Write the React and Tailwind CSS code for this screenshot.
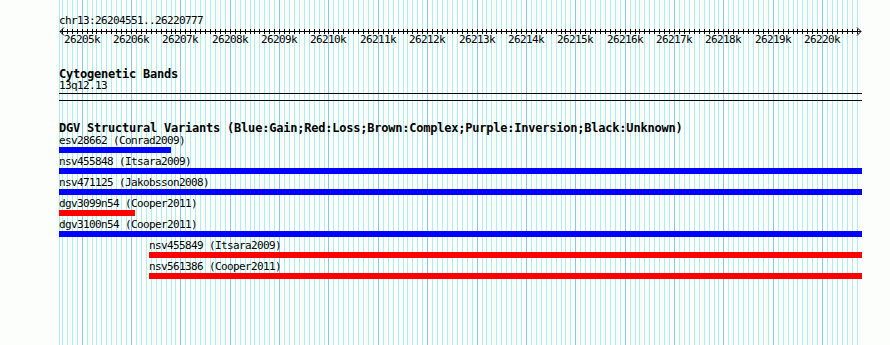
import React from "react";

const START = 26204551;
const px = (pos) => Math.floor(60 + ((pos - START) * 801) / 16226);

const minor = [];
for (let p = 26204600; p <= 26220700; p += 100) minor.push(p);
const majors = [];
for (let k = 26205; k <= 26220; k++) majors.push(k);

const variants = [
  { name: "esv28662", src: "Conrad2009", color: "bg-[#0000ff]", s: 59, e: 171 },
  { name: "nsv455848", src: "Itsara2009", color: "bg-[#0000ff]", s: 59, e: 862 },
  { name: "nsv471125", src: "Jakobsson2008", color: "bg-[#0000ff]", s: 59, e: 862 },
  { name: "dgv3099n54", src: "Cooper2011", color: "bg-[#ff0000]", s: 59, e: 135 },
  { name: "dgv3100n54", src: "Cooper2011", color: "bg-[#0000ff]", s: 59, e: 862 },
  { name: "nsv455849", src: "Itsara2009", color: "bg-[#ff0000]", s: 149, e: 862 },
  { name: "nsv561386", src: "Cooper2011", color: "bg-[#ff0000]", s: 149, e: 862 },
];

function Grid() {
  return (
    <svg className="absolute inset-0" width="890" height="345">
      <line x1="59.5" y1="0" x2="59.5" y2="345" stroke="#aeeeee" strokeWidth="1" />
      {minor.map((p) => {
        const x = px(p) + 0.5;
        const major = p % 1000 === 0;
        return (
          <line
            key={p}
            x1={x}
            y1="0"
            x2={x}
            y2="345"
            stroke={major ? "#88c6ee" : "#aeeeee"}
            strokeWidth="1"
          />
        );
      })}
    </svg>
  );
}

function Ruler() {
  return (
    <svg width="803" height="7" className="block overflow-visible">
      <line x1="1" y1="4.5" x2="802" y2="4.5" stroke="#000" strokeWidth="1" />
      {minor.map((p) => {
        const x = px(p) - 59 + 0.5;
        return <line key={p} x1={x} y1="2" x2={x} y2="7" stroke="#000" strokeWidth="1" />;
      })}
      <polyline points="5,0.5 1,4.5 5,8.5" fill="none" stroke="#000" strokeWidth="1" />
      <polyline points="798,0.5 802,4.5 798,8.5" fill="none" stroke="#000" strokeWidth="1" />
    </svg>
  );
}

export default function App() {
  const mono = "font-['DejaVu_Sans_Mono',monospace] text-[11px] leading-[12px] tracking-[-0.62px] text-black whitespace-pre";
  const bold = "font-['DejaVu_Sans_Mono',monospace] font-bold text-[12px] tracking-[-0.22px] text-black whitespace-pre";
  return (
    <div className="relative w-[890px] h-[345px] overflow-hidden bg-[#fcfefc]">
      <Grid />
      <div className="relative pl-[59px] flex flex-col">
        <div className={`${mono} mt-[15px] h-[12px]`}>chr13:26204551..26220777</div>
        <Ruler />
        <div className="relative h-[13px] w-[803px]">
          {majors.map((k) => (
            <span
              key={k}
              className={`${mono} absolute top-0`}
              style={{ left: px(k * 1000) - 59 - 18 }}
            >
              {k}k
            </span>
          ))}
        </div>
        <div className={`${bold} mt-[21px] leading-[12px] h-[12px]`}>Cytogenetic Bands</div>
        <div className={`${mono} h-[12px]`}>13q12.13</div>
        <div className="mt-[1px] h-px w-[803px] bg-black" />
        <div className="mt-[6px] h-px w-[803px] bg-black" />
        <div className={`${bold} mt-[21px] leading-[12px] h-[12px]`}>
          DGV Structural Variants (Blue:Gain;Red:Loss;Brown:Complex;Purple:Inversion;Black:Unknown)
        </div>
        <div className="mt-[1px] flex flex-col gap-[3px]">
          {variants.map((v) => (
            <div key={v.name} className="flex flex-col" style={{ marginLeft: v.s - 59 }}>
              <div className={`${mono} h-[12px]`}>
                {v.name} ({v.src})
              </div>
              <div className={`h-[6px] ${v.color}`} style={{ width: v.e - v.s }} />
            </div>
          ))}
        </div>
      </div>
    </div>
  );
}
